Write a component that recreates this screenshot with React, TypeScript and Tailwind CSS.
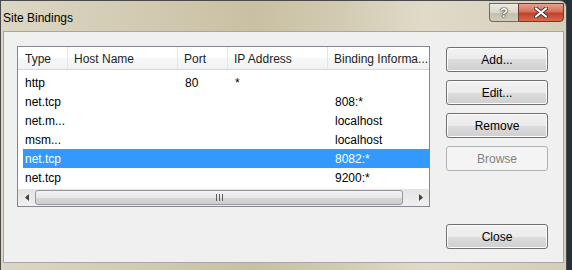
import React from 'react';

type Binding = { type: string; host: string; port: string; ip: string; info: string };

const ROWS: Binding[] = [
  { type: 'http', host: '', port: '80', ip: '*', info: '' },
  { type: 'net.tcp', host: '', port: '', ip: '', info: '808:*' },
  { type: 'net.m...', host: '', port: '', ip: '', info: 'localhost' },
  { type: 'msm...', host: '', port: '', ip: '', info: 'localhost' },
  { type: 'net.tcp', host: '', port: '', ip: '', info: '8082:*' },
  { type: 'net.tcp', host: '', port: '', ip: '', info: '9200:*' },
];

const SELECTED = 4;

const font = { fontFamily: '"Liberation Sans", Arial, sans-serif' };

function DialogButton({ label, disabled }: { label: string; disabled?: boolean }) {
  if (disabled) {
    return (
      <div className="h-[25px] w-[102px] rounded-[3px] border border-[#adb2b5] bg-[#f4f4f4] flex items-center justify-center text-[12px] text-[#838383]">
        {label}
      </div>
    );
  }
  return (
    <div className="h-[25px] w-[102px] rounded-[3px] border border-[#707070] bg-[linear-gradient(to_bottom,#f2f2f2_0%,#ebebeb_50%,#dddddd_50%,#cfcfcf_100%)] shadow-[inset_0_0_0_1px_#fcfcfc] flex items-center justify-center text-[12px] text-black">
      {label}
    </div>
  );
}

function ScrollArrow({ dir }: { dir: 'left' | 'right' }) {
  return (
    <div className="w-[17px] h-full flex items-center justify-center">
      <svg width="4" height="7" viewBox="0 0 4 7">
        {dir === 'left' ? <path d="M4 0 L0 3.5 L4 7 Z" fill="#404040" /> : <path d="M0 0 L4 3.5 L0 7 Z" fill="#404040" />}
      </svg>
    </div>
  );
}

export default function App() {
  return (
    <div className="w-[572px] h-[270px] bg-[#233040] overflow-hidden" style={font}>
      <div className="w-[567px] h-[272px] rounded-tr-[7px] border border-[#4a4a4a] bg-[linear-gradient(to_right,#dcd7c5_0%,#d4cdb5_20%,#c9c0a3_45%,#d2cbb2_60%,#e0dbc9_75%,#d4ceb8_100%)] flex flex-col">
        {/* title bar */}
        <div className="h-[30px] flex items-start justify-between pl-[2px]">
          <div className="pt-[8px] text-[12px] text-black">Site Bindings</div>
          <div className="flex pt-[2px] pr-[2px]">
            <div className="w-[29px] h-[19px] rounded-bl-[4px] border border-[#6b6b6b] border-r-0 bg-[linear-gradient(to_bottom,#eeebe3_0%,#d9d5c8_50%,#c3bfae_51%,#d0ccbc_100%)] flex items-center justify-center">
              <span className="text-[13px] font-bold leading-none text-white [text-shadow:0_0_1px_#333,0_0_1px_#333,0_0_2px_#333]">?</span>
            </div>
            <div className="w-[46px] h-[19px] rounded-br-[4px] border border-[#6b3a32] bg-[linear-gradient(to_bottom,#e8a08f_0%,#d5705c_45%,#c2402a_55%,#d86a4f_100%)] flex items-center justify-center">
              <svg width="14" height="11" viewBox="0 0 14 11">
                <path d="M2 1.5 L12 9.5 M12 1.5 L2 9.5" stroke="#3a3a3a" strokeWidth="4" strokeLinecap="round" />
                <path d="M2 1.5 L12 9.5 M12 1.5 L2 9.5" stroke="#ffffff" strokeWidth="2.2" strokeLinecap="round" />
              </svg>
            </div>
          </div>
        </div>

        {/* client area */}
        <div className="ml-[2px] mr-[2px] h-[232px] border border-[#a6a6a6] bg-[#f0f0f0] flex gap-[16px] pt-[14px] pl-[13px]">
          {/* list view */}
          <div className="w-[413px] h-[161px] border border-[#828790] bg-white flex flex-col">
            <div className="h-[23px] flex text-[12px] text-[#1e1e1e] bg-[linear-gradient(to_bottom,#ffffff_0%,#ffffff_50%,#f7f8fa_50%,#f1f2f4_100%)] border-b border-[#d5d5d5]">
              <div className="w-[50px] pl-[7px] pt-[1px] flex items-center border-r border-[#e5e5e5]">Type</div>
              <div className="w-[110px] pl-[6px] pt-[1px] flex items-center border-r border-[#e5e5e5]">Host Name</div>
              <div className="w-[50px] pl-[6px] pt-[1px] flex items-center border-r border-[#e5e5e5]">Port</div>
              <div className="w-[100px] pl-[6px] pt-[1px] flex items-center border-r border-[#e5e5e5]">IP Address</div>
              <div className="flex-1 pl-[6px] pt-[1px] flex items-center whitespace-nowrap">Binding Informa...</div>
            </div>
            <div className="pt-[3px] pl-[5px] flex-1 flex flex-col">
              {ROWS.map((r, i) => {
                const sel = i === SELECTED;
                return (
                  <div
                    key={i}
                    className={`h-[19px] flex items-center text-[12px] ${sel ? 'bg-[#3399ff] text-white' : 'text-black'}`}
                  >
                    <div className="w-[45px] pl-[2px]">{r.type}</div>
                    <div className="w-[110px]">{r.host}</div>
                    <div className="w-[50px] pl-[7px]">{r.port}</div>
                    <div className="w-[100px] pl-[7px]">{r.ip}</div>
                    <div className="flex-1 pl-[7px]">{r.info}</div>
                  </div>
                );
              })}
            </div>
            <div className="h-[17px] flex bg-[linear-gradient(to_bottom,#e3e3e3,#f0f0f0)]">
              <ScrollArrow dir="left" />
              <div className="flex-1 py-[1px] pr-[9px]">
                <div className="h-full rounded-[3px] border border-[#979797] bg-[linear-gradient(to_bottom,#f3f3f3_0%,#e8e8e8_50%,#d6d6d6_51%,#cfcfcf_100%)] flex items-center justify-center">
                  <div className="flex gap-[2px]">
                    <div className="w-[1px] h-[7px] bg-[#5a5a5a]" />
                    <div className="w-[1px] h-[7px] bg-[#5a5a5a]" />
                    <div className="w-[1px] h-[7px] bg-[#5a5a5a]" />
                  </div>
                </div>
              </div>
              <ScrollArrow dir="right" />
            </div>
          </div>

          {/* buttons */}
          <div className="flex flex-col gap-[8px] pt-[1px]">
            <DialogButton label="Add..." />
            <DialogButton label="Edit..." />
            <DialogButton label="Remove" />
            <DialogButton label="Browse" disabled />
            <div className="mt-[45px]">
              <DialogButton label="Close" />
            </div>
          </div>
        </div>
      </div>
    </div>
  );
}
